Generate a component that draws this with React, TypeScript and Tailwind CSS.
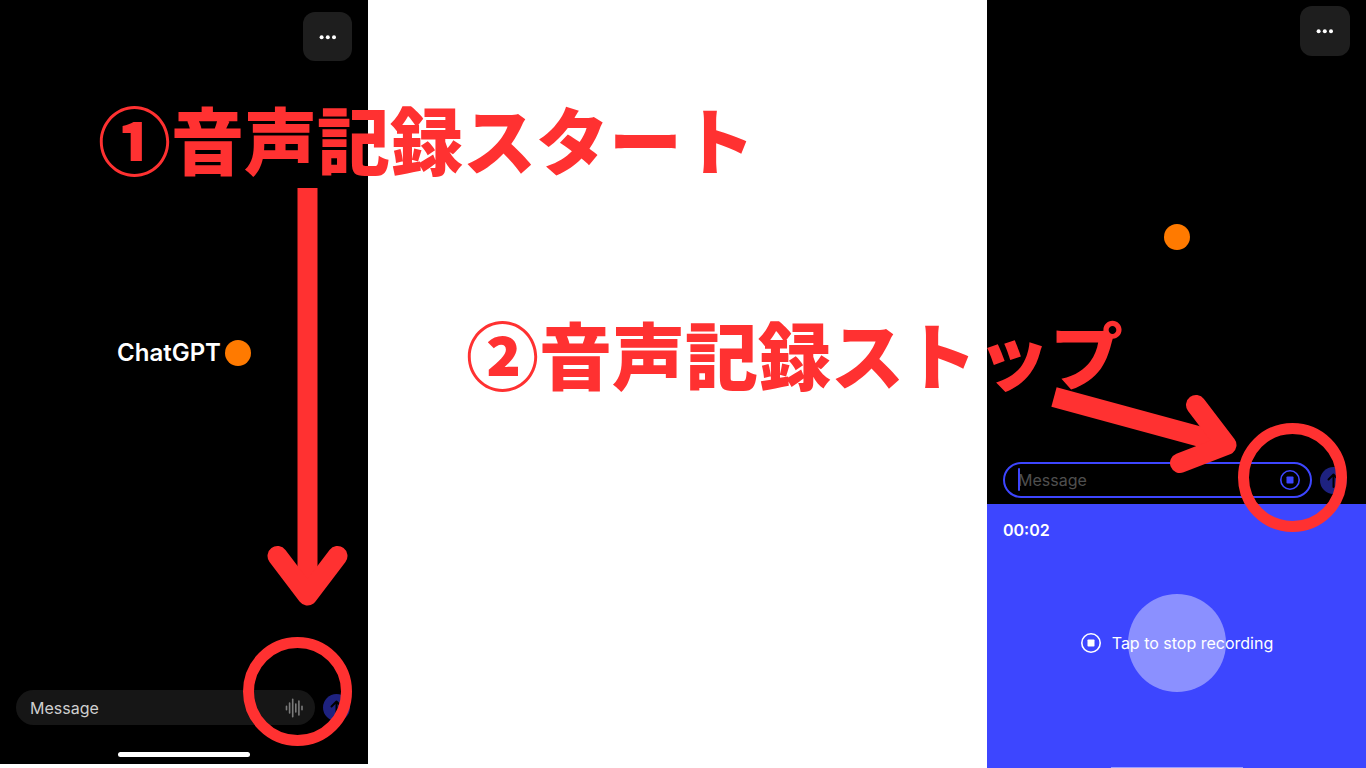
import React from "react";
import { clsx } from "clsx";

function MenuButton({ className }: { className?: string }) {
  return (
    <button
      type="button"
      aria-label="More options"
      className={clsx("grid cursor-pointer place-items-center rounded-xl bg-[#1e1e1e]", className)}
    >
      <svg width="18" height="6" viewBox="0 0 18 6" fill="#fff">
        <circle cx="2.6" cy="3.2" r="2" />
        <circle cx="8.8" cy="3.2" r="2" />
        <circle cx="15" cy="3.2" r="2" />
      </svg>
    </button>
  );
}

function SendButton() {
  return (
    <button
      type="button"
      aria-label="Send"
      className="grid size-[27px] shrink-0 cursor-pointer place-items-center rounded-full bg-[#1e2280]"
    >
      <svg width="27" height="27" viewBox="0 0 27 27" fill="none" stroke="#000" strokeWidth="2">
        <path d="M13.5 20V7.5M8.5 12.5l5-5 5 5" strokeLinecap="round" strokeLinejoin="round" />
      </svg>
    </button>
  );
}

function WaveIcon() {
  return (
    <svg width="18" height="20" viewBox="0 0 18 20" stroke="#7b7b7b" strokeWidth="1.6" strokeLinecap="round">
      <path d="M1.5 8.3v3.4M4.6 5v10M7.7 1.2v17.6M10.8 6v8M13.9 3v14M17 8.3v3.4" />
    </svg>
  );
}

function StopIcon({ className }: { className?: string }) {
  return (
    <svg width="22" height="22" viewBox="0 0 22 22" className={className}>
      <circle cx="11" cy="11" r="9.2" fill="none" stroke="currentColor" strokeWidth="1.6" />
      <rect x="7.5" y="7.5" width="7" height="7" rx="0.8" fill="currentColor" />
    </svg>
  );
}

function Dot() {
  return <span className="size-[26px] shrink-0 rounded-full bg-[#ff7a00]" />;
}

function Caption({ children, className }: { children: React.ReactNode; className?: string }) {
  return (
    <h2
      lang="ja"
      className={clsx(
        "absolute z-10 font-['Noto_Sans_CJK_JP',sans-serif] text-[73px] leading-[80px] font-black whitespace-nowrap text-[#ff3131]",
        className
      )}
    >
      {children}
    </h2>
  );
}

function Ring({ className }: { className?: string }) {
  return (
    <span
      className={clsx(
        "pointer-events-none absolute z-10 size-[109px] rounded-full border-[11px] border-[#ff3131]",
        className
      )}
    />
  );
}

function StartScreen() {
  return (
    <section className="relative mb-1 flex w-[368px] shrink-0 flex-col bg-black">
      <header className="flex justify-end px-4 pt-3">
        <MenuButton className="size-[49px]" />
      </header>
      <div className="flex grow items-center justify-center gap-1 pb-[46px]">
        <h1 className="text-[24px] leading-8 font-semibold text-white">ChatGPT</h1>
        <Dot />
      </div>
      <form className="flex items-center gap-2 pr-[18px] pl-4">
        <div className="flex h-[35px] min-w-0 grow items-center rounded-full bg-[#161616] pr-3 pl-[14px]">
          <input
            type="text"
            aria-label="Message"
            placeholder="Message"
            className="min-w-0 grow text-[16px] text-white outline-none placeholder:text-[#cfcfcf]"
          />
          <button type="button" aria-label="Record voice" className="cursor-pointer">
            <WaveIcon />
          </button>
        </div>
        <SendButton />
      </form>
      <div className="mx-auto mt-[27px] mb-[7px] h-[5px] w-[132px] rounded-full bg-white" />

      <Caption className="top-[97px] left-[98px]">①音声記録スタート</Caption>
      <svg
        className="pointer-events-none absolute top-[188px] left-[267px] z-10"
        width="82"
        height="420"
        viewBox="0 0 82 420"
        fill="none"
        stroke="#ff3131"
        strokeWidth="20"
      >
        <path d="M40.5 0v400" />
        <path d="M10.5 368l30 39.5 30-39.5" strokeLinecap="round" strokeLinejoin="round" />
      </svg>
      <Ring className="right-4 bottom-[18px]" />
    </section>
  );
}

function RecordingScreen() {
  return (
    <section className="relative flex w-[379px] shrink-0 flex-col bg-black">
      <header className="flex justify-end px-4 pt-[6px]">
        <MenuButton className="size-[50px]" />
      </header>
      <div className="flex grow items-center justify-center pb-11">
        <Dot />
      </div>
      <form className="flex items-center gap-2 pr-[19px] pb-[6px] pl-4">
        <div className="relative flex h-9 min-w-0 grow items-center rounded-full border-2 border-[#3d46ff] pr-[9px] pl-[13px]">
          <span className="absolute top-1 left-[13px] h-[23px] w-[2px] rounded-full bg-[#3d46ff]" />
          <input
            type="text"
            aria-label="Message"
            placeholder="Message"
            className="min-w-0 grow text-[16px] text-white outline-none placeholder:text-[#4f4f4f]"
          />
          <button type="button" aria-label="Stop" className="cursor-pointer text-[#3d46ff]">
            <StopIcon />
          </button>
        </div>
        <SendButton />
      </form>
      <div className="flex h-[264px] flex-col overflow-hidden bg-[#3d46ff] text-white">
        <time className="px-4 pt-4 text-[16px] leading-5 font-semibold">00:02</time>
        <div className="relative mt-[53px] flex h-[100px] shrink-0 items-center justify-center">
          <span className="absolute size-[98px] rounded-full bg-[#8b90ff]" />
          <button type="button" className="relative flex cursor-pointer items-center gap-[10px] text-[16px]">
            <StopIcon />
            Tap to stop recording
          </button>
        </div>
        {/* home indicator, mostly cut off by the screen edge */}
        <div className="mx-auto mt-[74px] h-[5px] w-[132px] shrink-0 bg-[#9a9eff]" />
      </div>

      <Caption className="top-[312px] right-[243px]">②音声記録ストップ</Caption>
      <svg
        className="pointer-events-none absolute top-[385px] right-[126px] z-10"
        width="190"
        height="90"
        viewBox="0 0 190 90"
        fill="none"
        stroke="#ff3131"
        strokeWidth="20"
      >
        <path d="M4 12l160 43.5" />
        <path d="M146 20l30.5 40-46.5 18" strokeLinecap="round" strokeLinejoin="round" />
      </svg>
      <Ring className="right-[19px] bottom-[236px]" />
    </section>
  );
}

export default function App() {
  return (
    <main className="flex min-h-screen justify-between overflow-hidden bg-white font-['Inter',sans-serif]">
      <StartScreen />
      <RecordingScreen />
    </main>
  );
}
